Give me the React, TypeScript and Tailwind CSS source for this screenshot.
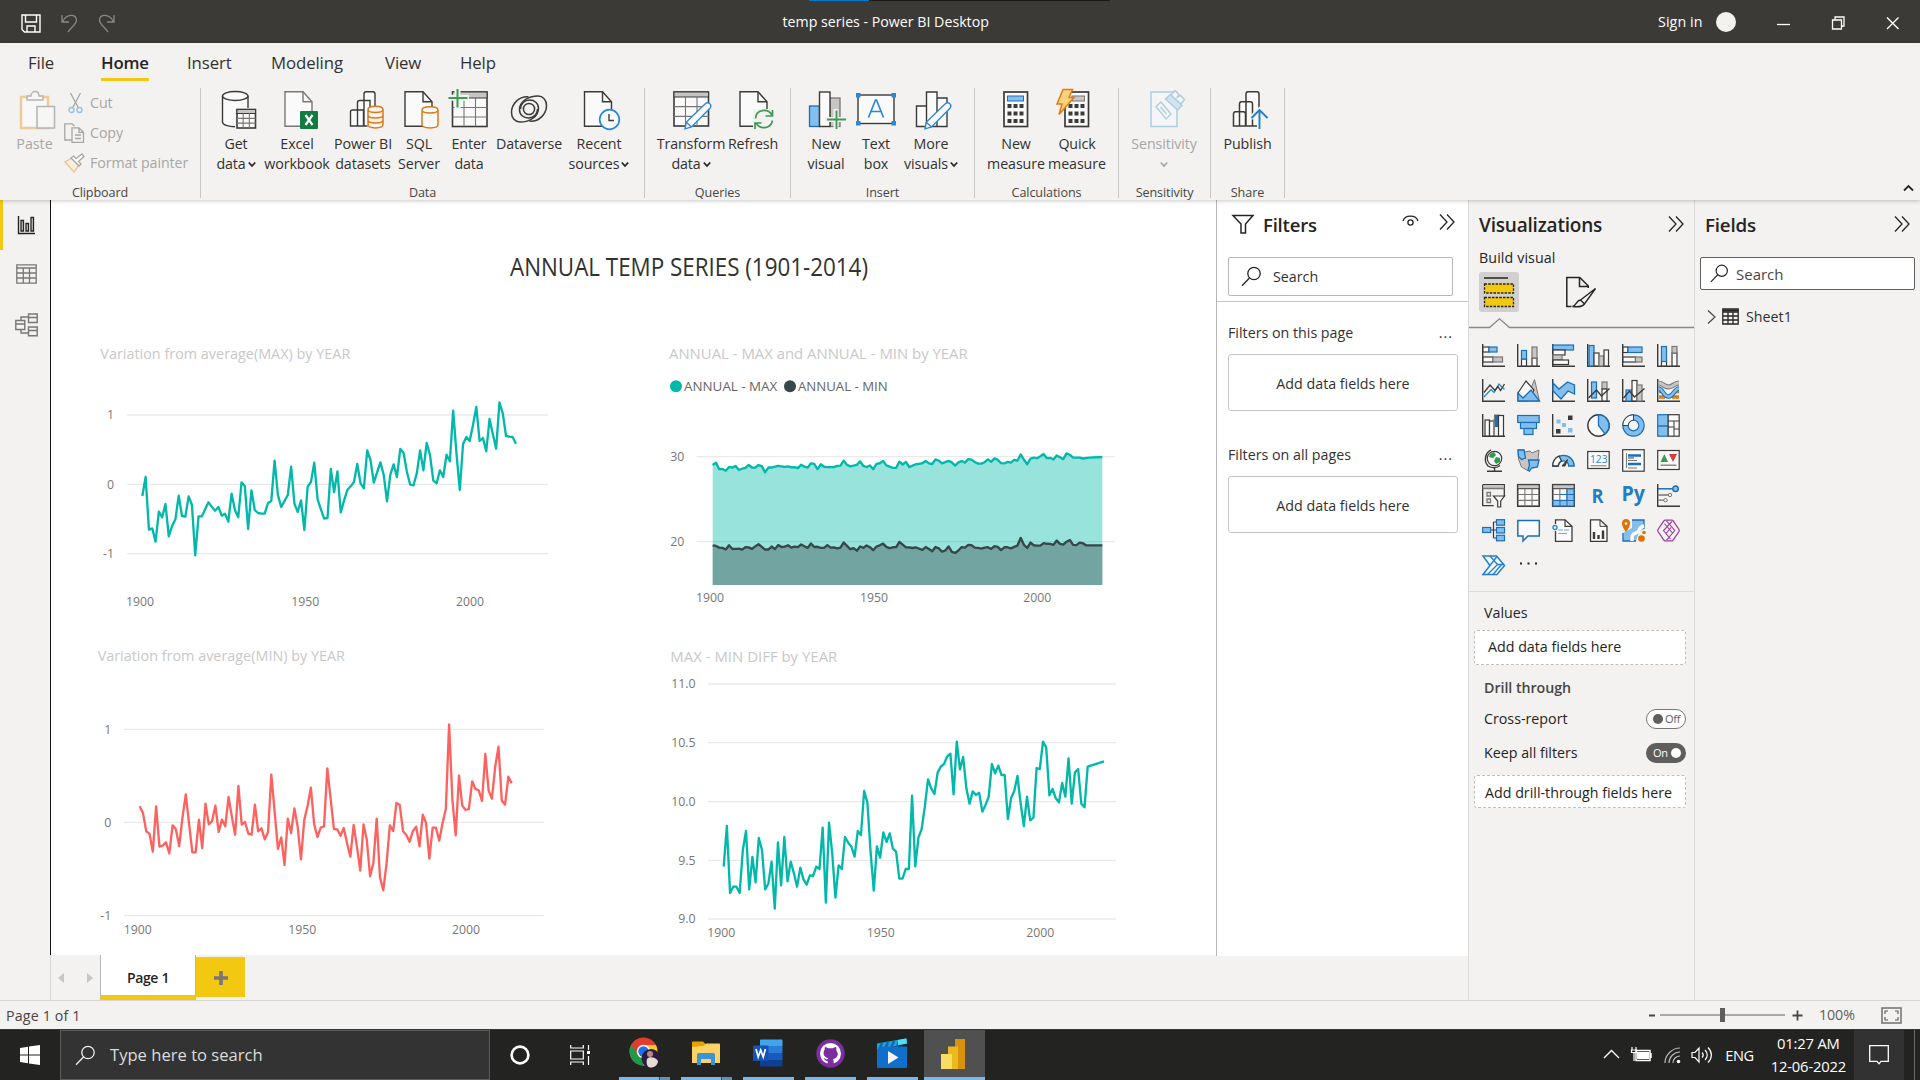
import React from "react";

type Kids = { children?: React.ReactNode };

const DK = "#3b3a39";
const GY = "#797775";
const LG = "#c8c6c4";
const BL = "#1b6fb8";
const LB = "#83beec";
const WH = "#fafafa";

/* ---------- data ---------- */

const maxVar = [
  498, 441, 599, 595, 635, 545, 562, 522, 619, 588, 568, 497, 558, 560, 499, 525, 676, 559, 559, 538, 517, 530, 542, 531, 557,
  551, 575, 491, 540, 562, 457, 469, 597, 481, 540, 549, 551, 551, 519, 513, 392, 495, 531, 513, 495, 410, 521, 546, 511, 600,
  470, 456, 398, 508, 538, 566, 564, 417, 486, 424, 547, 512, 480, 469, 456, 402, 460, 475, 361, 390, 458, 427, 397, 435, 514,
  434, 403, 441, 357, 369, 425, 464, 466, 430, 361, 421, 339, 375, 452, 460, 421, 441, 374, 394, 242, 370, 480, 342, 321, 333,
  285, 231, 333, 324, 364, 267, 312, 356, 217, 250, 318, 320, 321, 341,
];

const minVar = [
  499, 519, 574, 581, 635, 499, 620, 617, 607, 640, 556, 568, 618, 533, 463, 550, 637, 637, 539, 624, 491, 553, 543, 497, 576,
  539, 559, 471, 530, 584, 438, 554, 546, 581, 584, 494, 574, 565, 598, 576, 404, 515, 627, 592, 675, 536, 579, 505, 560, 658,
  540, 498, 443, 552, 591, 563, 559, 385, 475, 567, 568, 587, 564, 610, 650, 555, 620, 692, 553, 600, 709, 668, 536, 712, 751,
  670, 556, 573, 489, 495, 574, 585, 605, 573, 560, 619, 524, 549, 656, 563, 563, 602, 550, 507, 253, 480, 586, 407, 497, 510,
  507, 424, 447, 451, 483, 342, 452, 476, 380, 320, 482, 494, 410, 430,
];

const diff = [
  680, 558, 759, 740, 740, 759, 630, 573, 748, 651, 727, 594, 630, 748, 731, 665, 806, 607, 736, 591, 724, 665, 700, 740, 683,
  718, 734, 706, 708, 680, 687, 563, 788, 548, 640, 773, 676, 687, 591, 608, 620, 650, 573, 585, 453, 487, 635, 752, 619, 653,
  577, 606, 580, 626, 635, 716, 716, 687, 687, 467, 679, 592, 567, 500, 418, 445, 462, 398, 380, 372, 349, 341, 463, 305, 388,
  351, 445, 491, 454, 465, 458, 515, 495, 470, 372, 400, 377, 405, 405, 537, 475, 453, 408, 490, 558, 470, 541, 533, 384, 387,
  305, 322, 466, 447, 475, 487, 429, 470, 355, 491, 397, 387, 491, 502, 380,
];

const line = (ys: number[], x0: number, step: number) => ys.map((y, i) => `${(x0 + i * step).toFixed(1)},${y.toFixed(1)}`).join(" ");

const annualMax = line(maxVar.map((y) => 405 + (y - 498) * 0.124), 188, 9.83) + " 1318,383 1357,381";
const annualMin = line(minVar.map((y) => 646 + (y - 499) * 0.091), 188, 9.83) + " 1308,646 1357,646";

/* ---------- charts ---------- */

function Chart({ h, children }: { h: number } & Kids) {
  return (
    <svg width="480" height={h} viewBox={`0 0 1440 ${h * 3}`} fill="none" strokeLinejoin="round" fontFamily="'Open Sans', sans-serif">
      {children}
    </svg>
  );
}

function Title({ x, y, w, children }: { x: number; y: number; w: number } & Kids) {
  return (
    <text x={x} y={y} textLength={w} lengthAdjust="spacingAndGlyphs" fontSize="43" fill="#c8c8c8">
      {children}
    </text>
  );
}

function Axis({ x1, x2, rows, labelX, years, yearY }: { x1: number; x2: number; rows: [string, number][]; labelX: number; years: number[]; yearY: number }) {
  return (
    <g fontSize="37" fill="#777777">
      {rows.map(([t, y]) => (
        <g key={t}>
          <line x1={x1} x2={x2} y1={y} y2={y} stroke="#eaeaea" strokeWidth="4" />
          <text x={labelX} y={y + 13} textAnchor="end">
            {t}
          </text>
        </g>
      ))}
      {years.map((x, i) => (
        <text key={x} x={x} y={yearY} textLength="84" lengthAdjust="spacingAndGlyphs">
          {1900 + i * 50}
        </text>
      ))}
    </g>
  );
}

/* ---------- shared icons ---------- */

function Svg({ w, h, children, cls = "" }: { w: number; h: number; cls?: string } & Kids) {
  return (
    <svg width={w} height={h} viewBox={`0 0 ${w} ${h}`} fill="none" className={"shrink-0 overflow-visible " + cls}>
      {children}
    </svg>
  );
}

const DoubleChevron = () => (
  <Svg w={16} h={18}>
    <path d="M1 1.5l7 7.5-7 7.5M8 1.5l7 7.5-7 7.5" stroke="#252423" strokeWidth="1.3" />
  </Svg>
);

const Magnifier = ({ c = "#252423", s = 21 }: { c?: string; s?: number }) => (
  <svg width={s} height={s} viewBox="0 0 21 21" fill="none" className="shrink-0">
    <circle cx="13" cy="7.5" r="6.2" stroke={c} strokeWidth="1.3" />
    <path d="M8.5 12L1 19.8" stroke={c} strokeWidth="1.3" />
  </svg>
);

const Chev = ({ c = "#252423" }: { c?: string }) => (
  <Svg w={8} h={7}>
    <path d="M.8 1.5L4 5 7.200 1.5" stroke={c} strokeWidth="1.8" />
  </Svg>
);

/* ---------- ribbon ---------- */

const Page = ({ x = 10, c = DK, w = 27 }: { x?: number; c?: string; w?: number }) => (
  <>
    <path d={`M${x} 3.7h${w - 9}l9 10V38.300h-${w}z`} fill={WH} stroke={c} strokeWidth="1.4" />
    <path d={`M${x + w - 9} 3.700v10h9`} stroke={c} strokeWidth="1.4" />
  </>
);

const Grid = ({ x, y, w, h, head = 4, c = "#605e5c" }: { x: number; y: number; w: number; h: number; head?: number; c?: string }) => {
  const b = h - head;
  return (
    <>
      <rect x={x} y={y} width={w} height={h} fill={WH} stroke={c} strokeWidth="1.6" />
      <rect x={x} y={y} width={w} height={head} fill="#c8c6c4" stroke={c} />
      <path
        d={`M${x} ${y + head + b / 3}h${w}M${x} ${y + head + (2 * b) / 3}h${w}M${x + w / 3} ${y + head}v${b}M${x + (2 * w) / 3} ${y + head}v${b}`}
        stroke={GY}
        strokeWidth="1.1"
      />
    </>
  );
};

const Pencil = () => (
  <path d="M40.500 15.500c2 1.600 1.600 3.200.5 4.700L22.500 39l-6.500 1.800 1.200-6.500L36 16c1.500-1.300 3-1.600 4.500-.5zM17.500 34.500l4.500 4" fill={WH} stroke="#2b88d8" strokeWidth="1.4" />
);

const swirl = "M21.500 8.800C12 8 4.500 16 4.500 24.500C4.500 30 8 34 13 34C23 34 31.500 28.500 31.500 20.500C31.500 15 27.500 12 22.500 12C17 12 13.500 16 13.500 21";

const icons: Record<string, React.ReactNode> = {
  getData: (
    <>
      <path d="M8.500 8v26c0 2.800 5.500 4.700 13 4.700S34 36.800 34 34V8" fill={WH} stroke={DK} strokeWidth="1.4" />
      <ellipse cx="21.250" cy="8" rx="12.750" ry="4.500" fill={WH} stroke={DK} strokeWidth="1.400" />
      <rect x="21" y="20" width="23" height="21" fill="#f3f2f1" />
      <Grid x={23} y={21.500} w={18.500} h={18.500} c={DK} />
    </>
  ),
  excel: (
    <>
      <Page x={10} c={GY} />
      <rect x="25" y="23" width="18" height="18" rx="1" fill="#107c41" />
      <path d="M30.500 27l7 10M37.500 27l-7 10" stroke="#fff" strokeWidth="2.200" />
    </>
  ),
  datasets: (
    <>
      <path d="M23 38V6c0-1.500.8-2.300 2-2.300h7c1.200 0 2 .8 2 2.300v32zM16.500 38V14.500c0-1.300.8-2 2-2H29V38zM9.500 38V24c0-1.300.8-2 2-2h11v16z" fill={WH} stroke={DK} strokeWidth="1.400" />
      <path d="M26.500 21v18h17V21z" fill="#f3f2f1" />
      <path d="M27 21.500v15c0 4.500 15 4.500 15 0v-15c0-4.500-15-4.500-15 0c0 4 15 4 15 0M27 27c0 4 15 4 15 0M27 32c0 4 15 4 15 0" fill="#fdf3ea" stroke="#d97b1c" strokeWidth="1.500" />
    </>
  ),
  sql: (
    <>
      <Page x={8} />
      <path d="M25 22v14.500c0 4.500 16 4.500 16 0V22c0-4.500-16-4.500-16 0c0 4 16 4 16 0" fill={WH} stroke="#d97b1c" strokeWidth="1.500" />
    </>
  ),
  enter: (
    <>
      <Grid x={5.500} y={4} w={34.500} h={34.500} head={6} c={DK} />
      <path d="M0 9.800h22M10.500 0v21" stroke="#f3f2f1" strokeWidth="6" />
      <path d="M1.500 10h19M10.500 1v18.500" stroke="#3a9c50" strokeWidth="2" />
    </>
  ),
  dataverse: (
    <g stroke={DK} strokeWidth="1.500">
      <path d={swirl} />
      <path d={swirl} transform="rotate(180 22 21)" />
      <circle cx="22" cy="21" r="5.600" />
    </g>
  ),
  recent: (
    <>
      <Page x={7.500} />
      <circle cx="32.500" cy="31.500" r="9.800" fill={WH} stroke="#2b88d8" strokeWidth="1.700" />
      <path d="M32 26v6.500h5" stroke={DK} strokeWidth="1.400" />
    </>
  ),
  transform: (
    <>
      <Grid x={5} y={4} w={34.500} h={34} head={5} c={DK} />
      <Pencil />
    </>
  ),
  refresh: (
    <>
      <Page x={9} />
      <path d="M22 21h22v20H22z" fill="#f3f2f1" />
      <path d="M24.500 30.500c.5-9 12-11 16.500-3.500M41.500 22v6h-7M41.500 32.500c-1.500 8-12 10-16.500 2.500M24 41v-6h6.500" stroke="#3f9b54" strokeWidth="1.700" />
    </>
  ),
  newVisual: (
    <>
      <rect x="5.500" y="18" width="10" height="20.500" fill={LB} stroke={BL} strokeWidth="1.300" />
      <rect x="26" y="10" width="10" height="28.500" fill={LG} stroke={GY} strokeWidth="1.300" />
      <rect x="15.500" y="4" width="10.500" height="34.500" fill={WH} stroke={DK} strokeWidth="1.400" />
      <path d="M21 31.500h22M32 21v20" stroke="#f3f2f1" strokeWidth="5" />
      <path d="M23 31.500h19M32.500 22.500v18.500" stroke="#3a9c50" strokeWidth="1.900" />
    </>
  ),
  textBox: (
    <>
      <rect x="4" y="7" width="36" height="28.500" fill={WH} stroke={DK} strokeWidth="1.400" />
      <path d="M2 5h4.500v4.500H2zM37.500 5H42v4.500h-4.500zM2 33h4.500v4.500H2zM37.500 33H42v4.500h-4.500z" fill="#2b88d8" />
      <path d="M14.500 29.500L21.500 12h1l7 17.500M17 23.500h10" stroke="#2b88d8" strokeWidth="1.700" />
    </>
  ),
  moreVisuals: (
    <>
      <path d="M7.500 18h10v20.500h-10zM28 10h10v28.500H28zM17.500 4H28v34.500H17.500z" fill={WH} stroke={DK} strokeWidth="1.400" />
      <Pencil />
    </>
  ),
  measure: (
    <>
      <rect x="10" y="4" width="23.500" height="34.500" fill={WH} stroke={DK} strokeWidth="1.700" />
      <rect x="13.500" y="8" width="16" height="5" fill={LB} stroke={BL} />
      <path d="M13.500 18h16M13.500 25.500h16M13.500 33h16" stroke={DK} strokeWidth="4" strokeDasharray="4 2" />
    </>
  ),
  quick: (
    <>
      <rect x="10" y="4" width="23.500" height="34.500" fill={WH} stroke={DK} strokeWidth="1.700" />
      <rect x="17" y="8" width="12.500" height="5" fill={LG} stroke={GY} />
      <path d="M13.500 18h16M13.500 25.500h16M13.500 33h16" stroke={DK} strokeWidth="4" strokeDasharray="4 2" />
      <path d="M8 1.500h9.500l-3.500 8h5L4 26.500l3-10.500H2z" fill="#fbd27c" stroke="#e07b10" strokeWidth="1.500" />
    </>
  ),
  sensitivity: (
    <g opacity="0.45">
      <path d="M9 4h26v34.500H9z" fill={WH} stroke="#5ba4cf" strokeWidth="1.500" />
      <path d="M14 18.500l5-4.500 10 12-5 5zM18.500 19l6 7" fill={WH} stroke="#5ba4cf" strokeWidth="1.400" />
      <path d="M23.500 11l5-4.500 11.500 11-4.500 4.500z" fill="#a9d3ee" stroke="#5ba4cf" strokeWidth="1.600" />
      <path d="M29 7l4-4.500 4 4-1.500 2.500 3-1.500 4 4-3.500 4.500z" fill={WH} stroke="#5ba4cf" strokeWidth="1.500" />
    </g>
  ),
  publish: (
    <>
      <path d="M20 38V6c0-1.500.8-2.300 2-2.300h9c1.200 0 2 .8 2 2.300v32zM13.500 38V16c0-1.500.8-2.300 2-2.300h9c1.200 0 2 .8 2 2.300v22zM7.500 38V26c0-1.500.8-2.300 2-2.300h8c1.200 0 2 .8 2 2.300v12z" fill={WH} stroke={DK} strokeWidth="1.500" />
      <path d="M33.500 42V20M25 30l8.500-8 8.500 8" stroke="#f3f2f1" strokeWidth="5" />
      <path d="M33.500 41V21.500M25.500 30l8-8 8 8" stroke="#1f7fc4" strokeWidth="1.900" />
    </>
  ),
};

function Btn({ w, icon, a, b, chev, dim }: { w: string; icon: string; a: string; b?: string; chev?: boolean; dim?: boolean }) {
  return (
    <div className={"flex shrink-0 flex-col items-center text-[14.25px] leading-5 tracking-[-0.1px] whitespace-nowrap " + w + (dim ? " text-[#a8a6a4]" : " text-[#323130]")}>
      <Svg w={44} h={42} cls="mb-[4px]">
        {icons[icon]}
      </Svg>
      <span>{a}</span>
      <span className="flex h-5 items-center gap-[2px]">
        {b}
        {chev && <Chev c={dim ? "#a8a6a4" : "#252423"} />}
      </span>
    </div>
  );
}

function Group({ w, pad, label, children }: { w: string; pad: string; label: string } & Kids) {
  return (
    <div className={"flex h-[110px] shrink-0 flex-col border-r border-[#c8c6c4] " + w}>
      <div className={"flex h-[93px] shrink-0 " + pad}>{children}</div>
      <div className="shrink-0 pt-[2px] text-center text-[12.6px] leading-[19px] tracking-[-0.1px] text-[#484644]">{label}</div>
    </div>
  );
}

function Ribbon() {
  return (
    <div className="relative z-10 h-[157px] shrink-0 bg-[#f3f2f1] shadow-[0_1px_4px_rgba(0,0,0,0.22)]">
      <div className="flex h-[45px] pl-[28px] text-[16.8px] leading-[40px] tracking-[-0.1px] text-[#323130]">
        <span className="w-[73px]">File</span>
        <span className="relative w-[86px] font-semibold tracking-[-0.200px] text-[#252423]">
          Home
          <i className="absolute top-[35px] left-0 h-[3px] w-[48px] bg-[#f2c811]" />
        </span>
        <span className="w-[84px]">Insert</span>
        <span className="w-[114px]">Modeling</span>
        <span className="w-[75px]">View</span>
        <span>Help</span>
      </div>
      <div className="flex">
        <Group w="w-[201px]" pad="" label="Clipboard">
          <div className="flex w-[69px] flex-col items-center text-[14.250px] leading-5 text-[#a8a6a4]">
            <Svg w={44} h={42} cls="mb-[4px] ml-[5px]">
              <g opacity="0.5">
                <path d="M6 9h27v31H6z" fill="#fff" stroke="#e8a33d" strokeWidth="2.500" />
                <path d="M12 12V8h4c0-6 8-6 8 0h4v4z" fill={WH} stroke={GY} strokeWidth="1.400" />
                <path d="M22 18.500h17.500V40H22z" fill={WH} stroke={GY} strokeWidth="1.500" />
              </g>
            </Svg>
            <span>Paste</span>
          </div>
          <div className="-ml-[1px] flex flex-col gap-[10px] pt-[5px] text-[14.250px] leading-5 tracking-[-0.100px] text-[#a8a6a4]">
            <div className="flex items-center gap-[4px]">
              <Svg w={17} h={20}>
                <path d="M2.500 0l8 15M12.500 0l-8 15" stroke="#a8a6a4" strokeWidth="1.300" />
                <circle cx="3.500" cy="17" r="2.500" stroke="#92c3e2" strokeWidth="1.400" />
                <circle cx="11.500" cy="17" r="2.500" stroke="#92c3e2" strokeWidth="1.400" />
              </Svg>
              <span className="pl-px">Cut</span>
            </div>
            <div className="flex items-center gap-[5px]">
              <Svg w={21} h={20} cls="-ml-[4px]">
                <path d="M8 17H.8V.8H8L10.500 3" stroke="#a8a6a4" strokeWidth="1.300" />
                <path d="M8 4.800h7l4.500 4.500v10H8zM15 4.800v4.500h4.500M11 12h6M11 15.500h6" stroke="#a8a6a4" strokeWidth="1.300" />
              </Svg>
              Copy
            </div>
            <div className="flex items-center gap-[5px] whitespace-nowrap">
              <Svg w={21} h={20} cls="-ml-[4px]">
                <path d="M1 9l9 10 5-7-7-7z" fill="#fdf0e0" stroke="#f0c090" strokeWidth="1.300" />
                <path d="M7 5l8 8 2-2-2.500-2.500L20 3.500 18 1l-6 4.500L9.500 3z" fill={WH} stroke="#a8a6a4" strokeWidth="1.300" />
              </Svg>
              Format painter
            </div>
          </div>
        </Group>
        <Group w="w-[444px]" pad="pl-[4px]" label="Data">
          <Btn w="w-[62px]" icon="getData" a="Get" b="data" chev />
          <Btn w="w-[60px]" icon="excel" a="Excel" b="workbook" />
          <Btn w="w-[72px]" icon="datasets" a="Power BI" b="datasets" />
          <Btn w="w-[40px]" icon="sql" a="SQL" b="Server" />
          <Btn w="w-[60px]" icon="enter" a="Enter" b="data" />
          <Btn w="w-[60px]" icon="dataverse" a="Dataverse" />
          <Btn w="w-[80px]" icon="recent" a="Recent" b="sources" chev />
        </Group>
        <Group w="w-[146px]" pad="pl-[8px]" label="Queries">
          <Btn w="w-[76px]" icon="transform" a="Transform" b="data" chev />
          <Btn w="w-[48px]" icon="refresh" a="Refresh" />
        </Group>
        <Group w="w-[184px]" pad="pl-[9px]" label="Insert">
          <Btn w="w-[52px]" icon="newVisual" a="New" b="visual" />
          <Btn w="w-[48px]" icon="textBox" a="Text" b="box" />
          <Btn w="w-[62px]" icon="moreVisuals" a="More" b="visuals" chev />
        </Group>
        <Group w="w-[144px]" pad="pl-[8px]" label="Calculations">
          <Btn w="w-[66px]" icon="measure" a="New" b="measure" />
          <Btn w="w-[56px]" icon="quick" a="Quick" b="measure" />
        </Group>
        <Group w="w-[92px]" pad="" label="Sensitivity">
          <Btn w="w-[90px]" icon="sensitivity" a="Sensitivity" chev dim />
        </Group>
        <Group w="w-[74px]" pad="" label="Share">
          <Btn w="w-[73px]" icon="publish" a="Publish" />
        </Group>
        <div className="flex grow items-end justify-end pr-[6px] pb-[6px]">
          <Svg w={11} h={8}>
            <path d="M1 6.500l4.500-4.500L10 6.500" stroke="#252423" strokeWidth="1.800" />
          </Svg>
        </div>
      </div>
    </div>
  );
}

/* ---------- visualisation gallery ---------- */

const ax = <path d="M.7 0v22.300H23" stroke={DK} strokeWidth="1.400" />;

const R = ({ x, y, w, h, k }: { x: number; y: number; w: number; h: number; k: "b" | "g" | "w" }) => (
  <rect x={x} y={y} width={w} height={h} fill={k === "b" ? LB : k === "g" ? LG : WH} stroke={k === "b" ? BL : k === "g" ? GY : DK} strokeWidth="1.200" />
);

const gallery: React.ReactNode[] = [
  <>{ax}<R x={1} y={3} w={6} h={5} k="w" /><R x={7} y={3} w={8} h={5} k="b" /><R x={1} y={13} w={10} h={5} k="w" /><R x={11} y={13} w={9.500} h={5} k="g" /></>,
  <>{ax}<R x={4.500} y={15} w={5} h={7} k="w" /><R x={4.500} y={6.500} w={5} h={8.500} k="b" /><R x={15} y={14} w={5} h={8} k="w" /><R x={15} y={3} w={5} h={11} k="g" /></>,
  <>{ax}<R x={1} y={1} w={20.500} h={5} k="b" /><R x={1} y={6} w={12} h={5} k="w" /><R x={1} y={11} w={9} h={5} k="g" /><R x={1} y={16} w={15.500} h={4.500} k="w" /></>,
  <>{ax}<R x={2} y={1.500} w={5} h={20.500} k="b" /><R x={7} y={9} w={5} h={13} k="w" /><R x={12} y={12} w={5} h={10} k="g" /><R x={17} y={6} w={4.500} h={16} k="w" /></>,
  <>{ax}<R x={1} y={3} w={5} h={5.500} k="w" /><R x={6} y={3} w={14} h={5.500} k="b" /><R x={1} y={13} w={12.500} h={5} k="w" /><R x={13.500} y={13} w={6.500} h={5} k="g" /></>,
  <>{ax}<R x={4.500} y={17} w={5} h={5} k="w" /><R x={4.500} y={2.500} w={5} h={15} k="b" /><R x={15} y={9} w={5} h={13} k="w" /><R x={15} y={2.500} w={5} h={6.500} k="g" /></>,
  <>{ax}<path d="M2 18l7-7.500 3 3L17 5l5.500 5.500" stroke="#2b88d8" strokeWidth="1.300" /><path d="M2 13.500l6-7.500 5 5.500 3-4 2.500 4L22.500 5" stroke={DK} strokeWidth="1.300" /></>,
  <><path d="M9 22L17.500.5l5 21.500z" fill={LG} stroke={GY} /><path d="M1 14L9 2l8 9-7 11H1z" fill={WH} stroke={DK} strokeWidth="1.200" /><path d="M1 22v-8l5 5 8-8 8.500 11z" fill={LB} stroke={BL} strokeWidth="1.300" /></>,
  <>{ax}<path d="M1 4l6 6L15.500 3 22.500 6v9L16 12l-7 8-8-8z" fill={LB} stroke={BL} strokeWidth="1.300" /></>,
  <>{ax}<R x={4.500} y={3} w={5} h={16} k="b" /><R x={15} y={3} w={5} h={7} k="g" /><R x={15} y={10} w={5} h={12} k="w" /><path d="M1.500 19l8-8 5 6L22.500 9.500" stroke={DK} strokeWidth="1.400" /></>,
  <>{ax}<R x={4} y={11} w={6} h={11} k="b" /><R x={10} y={1.500} w={5} h={20.500} k="w" /><R x={15} y={6} w={5} h={16} k="g" /><path d="M1.500 19l6-7 5 6L22.500 9.500" stroke={DK} strokeWidth="1.400" /></>,
  <>{ax}<path d="M2 12.500h5M16 12.500h6M2 18h6M15 18h7" stroke="#e07b10" strokeWidth="3.500" /><path d="M1.500 4c5 0 5 4 10 4s5-4 10.500-4" stroke={GY} strokeWidth="5" /><path d="M1.500 4c5 0 5 4 10 4s5-4 10.500-4" stroke={LG} strokeWidth="3" /><path d="M1.500 9.500c4 0 5 8 10 8s6-8 10.500-8" stroke={BL} strokeWidth="4.500" /><path d="M1.500 9.500c4 0 5 8 10 8s6-8 10.500-8" stroke={LB} strokeWidth="2.500" /></>,
  <>{ax}<R x={3} y={6} w={4.500} h={16} k="w" /><R x={7.500} y={7} w={4.500} h={15} k="w" /><path d="M11 7h2.500V2H16v10" stroke={GY} strokeWidth="3" /><path d="M14.500 1v12" stroke={BL} strokeWidth="3" /><R x={16.500} y={1.500} w={5} h={20.500} k="w" /></>,
  <><R x={.700} y={1.500} w={21.500} h={7} k="b" /><R x={3.500} y={8.500} w={16} h={6} k="b" /><R x={7} y={14.500} w={9} h={6} k="b" /></>,
  <>{ax}<path d="M16 1.500h4.500V6H16zM4 15h4.500v4.500H4z" fill={DK} /><path d="M4.500 5.500h4v4h-4zM10 9h4v4h-4zM16 14h4.500v4.500H16z" fill={LB} /></>,
  <><circle cx="11.500" cy="11.500" r="10.700" fill={WH} stroke={DK} strokeWidth="1.400" /><path d="M11.500.8a10.700 10.700 0 016.500 19L11.500 11.500z" fill={LB} stroke={BL} strokeWidth="1.300" /></>,
  <><circle cx="11.500" cy="11.500" r="8" stroke={BL} strokeWidth="6.500" /><circle cx="11.500" cy="11.500" r="8" stroke={LB} strokeWidth="4.200" /><path d="M11.500.7A10.800 10.800 0 00.7 11.500h5.500a5.300 5.300 0 015.300-5.300z" fill={WH} stroke={DK} /></>,
  <><R x={.700} y={.700} w={10.500} h={21.500} k="b" /><path d="M.7 12h10.500" stroke={BL} strokeWidth="1.400" /><R x={11.200} y={.700} w={11} h={21.500} k="w" /><path d="M11.200 7h11M17 7v15M11.200 13h6M17 15h5" stroke={DK} /></>,
  <><circle cx="12.500" cy="9.500" r="7.200" fill={WH} stroke={DK} strokeWidth="1.200" /><path d="M8 5l4-2 2 3-3 3-4-1zM14 8l4 1v4l-4 2-2-3z" fill="#2e9a4e" /><path d="M9 .8A10.500 10.500 0 006 17c4 2.500 9 2 12-.5M12.500 18v4M5 22.200h15" stroke={DK} strokeWidth="1.400" /></>,
  <><path d="M1 1h6l1 2 5-1 2 2 7-3-1 10-1 7-6 1-2.500 3-7-4-3-8z" fill={LG} stroke={GY} /><path d="M1 1h6l1.500 8-4 1.500-3-3zM11.500 11h10.500l-1.500 7-6 1-2 3-1.500-1 1.500-5z" fill={LB} stroke={BL} strokeWidth="1.300" /></>,
  <><path d="M.8 17A10.700 10.700 0 0122.200 17h-5.500a5.200 5.200 0 00-10.400 0z" fill={LB} stroke={BL} strokeWidth="1.300" /><path d="M.8 17A10.700 10.700 0 017 7l2.500 5c-2 1-3.200 3-3.200 5z" fill={WH} stroke={DK} strokeWidth="1.300" /><path d="M10 17l5.500-6.500L13 17z" fill={DK} stroke={DK} /></>,
  <><R x={.700} y={2.500} w={21.500} h={17} k="w" /><text x="3" y="14" fontSize="10.500" fill="#2b88d8" textLength="17.500" lengthAdjust="spacingAndGlyphs" fontFamily="'Open Sans', sans-serif">123</text><path d="M3.500 16.800h16" stroke={GY} /></>,
  <><R x={.700} y={.700} w={21.500} h={21.500} k="w" /><path d="M4.500 4v15M6 11.500h9M6 19h9" stroke={GY} /><path d="M6 6.500h13M6 15h13" stroke={BL} strokeWidth="2.400" /><path d="M6 9h6" stroke={DK} /></>,
  <><R x={.700} y={1.500} w={21.500} h={19} k="w" /><path d="M3.500 13l3.800-8 3.800 8z" fill="#3a9c50" /><path d="M12 5h8l-4 8z" fill="#e03a3a" /><path d="M3.500 16.200h16" stroke={GY} strokeWidth="1.300" /></>,
  <><path d="M.7.7h21.600v12M.7.7v21h11" fill="none" stroke={DK} strokeWidth="1.300" /><path d="M1.300 1.500h20.500v2.500H1.300z" fill={LG} /><path d="M.7 4.500h21.600M5 8.500h3.500V12H5zM5 15h3.500v3.500H5z" stroke={GY} strokeWidth="1.300" /><path d="M11.500 12h11l-3.800 5v6h-3v-6z" fill={WH} stroke={DK} strokeWidth="1.200" /></>,
  <><Grid x={.7} y={.7} w={21.500} h={21.500} head={4} c={DK} /></>,
  <><Grid x={.7} y={.7} w={21.500} h={21.500} head={4} c={DK} /><path d="M15 5h7v17H1v-5.500h14zM8 10.500h7" fill={LB} stroke={BL} strokeWidth="1.200" /><path d="M15 10.500h7M8 16.500h14M8 16.500V22M15 16.500V22" stroke={BL} /></>,
  <><text x="4.500" y="18.500" fontSize="20" fontWeight="700" fill="#1f7fc4" textLength="12" lengthAdjust="spacingAndGlyphs" fontFamily="'Open Sans', sans-serif">R</text></>,
  <><text x="-.5" y="16.500" fontSize="20.500" fontWeight="700" fill="#1f7fc4" textLength="23.500" lengthAdjust="spacingAndGlyphs" fontFamily="'Open Sans', sans-serif">Py</text></>,
  <>{ax}<path d="M1 4.800h14" stroke={BL} strokeWidth="1.500" /><circle cx="18.500" cy="4.800" r="2.800" fill={LB} stroke={BL} strokeWidth="1.400" /><path d="M1 11h10.500M1 16.200h6" stroke={GY} strokeWidth="1.300" /><circle cx="13" cy="11" r="1.700" stroke={GY} /><circle cx="8.500" cy="16.200" r="1.700" stroke={GY} /></>,
  <><path d="M8 11h7M11.500 3v16M11.500 3H15M11.500 19H15" stroke={DK} strokeWidth="1.200" /><R x={.7} y={8.500} w={8} h={5} k="b" /><R x={14.500} y={.7} w={8} h={5.500} k="b" /><R x={14.500} y={8.500} w={8} h={5.500} k="b" /><R x={14.500} y={16.300} w={8} h={5.500} k="b" /></>,
  <><path d="M.8 1.500h21.500V17H11l-5 5v-5H.8z" fill={WH} stroke={BL} strokeWidth="1.500" /></>,
  <><path d="M3.500 5V.8h9.500l7 6.500v15H3.500V12" fill={WH} stroke={DK} strokeWidth="1.300" /><path d="M13 .8v6.500h7" stroke={DK} strokeWidth="1.200" /><path d="M6 11h5M6 14.500h9M12 11h5" stroke="#69afe5" /><circle cx="3" cy="8.500" r="2" fill={WH} stroke="#2b88d8" strokeWidth="1.400" /></>,
  <><path d="M3.500.8H13l7 6.500v15H3.500z" fill={WH} stroke={DK} strokeWidth="1.300" /><path d="M13 .8v6.500h7" stroke={DK} /><path d="M7 13v7M11.500 16v4M16 11.500V20" stroke={DK} strokeWidth="2.400" /></>,
  <><path d="M1 14v8h13L17 13l5-3V1H10v8z" fill={LB} /><path d="M1 14v8h13M10 1h12v9" stroke={BL} strokeWidth="1.300" /><path d="M10 22c0-5 0-7 4-8s2-6 8-7" stroke={WH} strokeWidth="3.500" /><path d="M4 0a4 4 0 014 4.500C8 8 4 13 4 13S0 8 0 4.500A4 4 0 014 0z" fill="#e07000" /><circle cx="4" cy="4.500" r="1.300" fill={WH} /><circle cx="19.500" cy="19.500" r="3.300" fill="#e07000" /><circle cx="22" cy="13.500" r="1.800" fill="#e07000" /></>,
  <><path d="M8.300 1.200h6.400q1 0 1.600 1l5.700 8.300q.6 1 0 2l-5.700 8.300q-.6 1-1.600 1H8.300q-1 0-1.600-1L1 12.500q-.6-1 0-2l5.700-8.300q.6-1 1.600-1z" stroke="#9b3f9b" strokeWidth="1.300" /><path d="M9.500 1.800l8.300 9.700-8.300 9.700M15 2.500L6.500 11.500l7 8.500M7.500 4.500l8 9.500M9 14.500l5-6" stroke="#9b3f9b" strokeWidth="1.100" /></>,
  <><path d="M1 2h13.500l8 9.500L15 20.500H1l7-9z" fill={WH} stroke="#1f7fd4" strokeWidth="1.500" /><path d="M8 2l7.500 8.500M8 11.500L15 2.500M15.500 10.500h6.500M5.500 20.500l10-10M11 20.500l8.500-10" stroke="#1f7fd4" strokeWidth="1.300" /></>,
];

/* ---------- side panes ---------- */

function FieldWell({ cls, children }: { cls: string } & Kids) {
  return <div className={"flex items-center justify-center rounded-[3px] border border-[#c8c6c4] bg-white pt-[2px] " + cls}>{children}</div>;
}

function Filters() {
  return (
    <div className="flex w-[252px] shrink-0 flex-col border-l border-[#b8b6b4] bg-white text-[14.250px] leading-5 text-[#323130]">
      <div className="flex h-[102px] shrink-0 flex-col border-b border-[#c8c6c4] pl-[11px]">
        <div className="flex h-[57px] items-start pt-[14px] pl-[4px]">
          <Svg w={22} h={20}>
            <path d="M1 1.500h20L13.500 10v9H9v-9z" stroke="#252423" strokeWidth="1.500" />
          </Svg>
          <span className="ml-[9px] w-[139px] pt-[1px] text-[18.500px] leading-5 font-semibold tracking-[-0.200px] text-[#252423]">Filters</span>
          <Svg w={17} h={14} cls="mr-[20px]">
            <path d="M1 7C3 .5 14 .5 16 7" stroke="#252423" strokeWidth="1.300" />
            <circle cx="8.500" cy="8.500" r="2.600" stroke="#252423" strokeWidth="1.300" />
          </Svg>
          <div className="-mt-[1px]">
            <DoubleChevron />
          </div>
        </div>
        <div className="flex h-[39px] w-[225px] shrink-0 items-center gap-[11px] rounded-[2px] border border-[#b8b6b4] pl-[12px]">
          <Magnifier />
          Search
        </div>
      </div>
      <div className="flex h-[52px] items-center justify-between pt-[10px] pr-[15px] pl-[11px]">
        <span>Filters on this page</span>
        <span className="tracking-[1px]">...</span>
      </div>
      <FieldWell cls="ml-[11px] h-[57px] w-[230px] shrink-0">Add data fields here</FieldWell>
      <div className="flex h-[65px] items-end justify-between pr-[15px] pb-[11px] pl-[11px]">
        <span>Filters on all pages</span>
        <span className="tracking-[1px]">...</span>
      </div>
      <FieldWell cls="ml-[11px] h-[57px] w-[230px] shrink-0">Add data fields here</FieldWell>
    </div>
  );
}

function Visualizations() {
  return (
    <div className="flex w-[226px] shrink-0 flex-col border-l border-[#dddbd9] text-[14.250px] leading-5 text-[#252423]">
      <div className="flex h-[48px] items-center justify-between pr-[10px] pl-[10px]">
        <span className="pt-[1px] text-[19px] font-semibold tracking-[-0.200px]">Visualizations</span>
        <DoubleChevron />
      </div>
      <span className="h-[24px] pl-[10px] leading-[20px] font-medium tracking-[0.100px]">Build visual</span>
      <div className="flex h-[46px] pl-[10px]">
        <div className="mr-[46px] flex h-[40px] w-[40px] items-center justify-center rounded-[3px] bg-[#d2d0ce]">
          <Svg w={32} h={32}>
            <path d="M1 2h24" stroke="#252423" strokeWidth="1.500" />
            <rect x="1.500" y="8" width="29" height="9" fill="#f2c811" stroke="#252423" strokeWidth="1.300" strokeDasharray="2.500 1.200" />
            <rect x="1.500" y="21.500" width="29" height="9" fill="#f2c811" stroke="#252423" strokeWidth="1.300" strokeDasharray="2.500 1.200" />
          </Svg>
        </div>
        <Svg w={32} h={32} cls="mt-[4px]">
          <path d="M6.500 30.500H1.800V1.500h13l8.500 8.500v2M14.500 1.500v9h9" stroke="#252423" strokeWidth="1.500" />
          <path d="M30.500 12.500L19.500 28l-4-4zM15.500 24l4 4c-2 3-8 3-12 2.500 4-1 4-6.500 8-6.500z" stroke="#252423" strokeWidth="1.400" />
        </Svg>
      </div>
      <Svg w={226} h={11}>
        <path d="M0 9.500h20.500L30.500 .8l10 8.700H225" stroke="#8a8886" strokeWidth="1.300" />
      </Svg>
      <div className="grid h-[263px] grid-cols-[repeat(6,23px)] content-start gap-[12px] border-b border-[#dddbd9] pt-[15px] pl-[13px]">
        {gallery.map((g, i) => (
          <Svg key={i} w={23} h={23}>
            {g}
          </Svg>
        ))}
        <Svg w={23} h={23}>
          <path d="M3 9.500h2M10.500 9.500h2M18 9.500h2" stroke="#252423" strokeWidth="2" />
        </Svg>
      </div>
      <span className="h-[38px] pt-[11px] pl-[15px]">Values</span>
      <div className="ml-[5px] flex h-[35px] w-[212px] shrink-0 items-center rounded-[3px] border border-dashed border-[#c0bebc] bg-white pb-px pl-[13px] whitespace-nowrap">Add data fields here</div>
      <span className="mt-[13px] pl-[15px] font-semibold tracking-[-0.050px] text-[#484644]">Drill through</span>
      <div className="mt-[11px] flex h-[20px] items-center justify-between pr-[8px] pl-[15px]">
        Cross-report
        <span className="flex h-5 w-10 items-center gap-[2px] rounded-full border border-[#797775] bg-white pl-[6px] text-[11px] tracking-[-0.300px] text-[#605e5c]">
          <i className="h-[10px] w-[10px] rounded-full bg-[#605e5c]" />
          Off
        </span>
      </div>
      <div className="mt-[14px] flex h-[20px] items-center justify-between pr-[8px] pl-[15px]">
        Keep all filters
        <span className="flex h-5 w-10 items-center gap-[3px] rounded-full bg-[#605e5c] pl-[7px] text-[11px] tracking-[-0.300px] text-white">
          On
          <i className="h-[10px] w-[10px] rounded-full bg-white" />
        </span>
      </div>
      <div className="mt-[12px] ml-[5px] flex h-[33px] w-[212px] shrink-0 items-center rounded-[3px] border border-dashed border-[#c0bebc] bg-white pt-[2px] pl-[10px] whitespace-nowrap">Add drill-through fields here</div>
    </div>
  );
}

function Fields() {
  return (
    <div className="flex grow flex-col border-l border-[#dddbd9] text-[14.250px] leading-5 text-[#323130]">
      <div className="flex h-[57px] items-start justify-between pt-[15px] pr-[10px] pl-[10px]">
        <span className="text-[18.800px] font-semibold tracking-[-0.200px] text-[#252423]">Fields</span>
        <DoubleChevron />
      </div>
      <div className="ml-[5px] flex h-[33px] w-[215px] shrink-0 items-center gap-[7px] rounded-[2px] border border-[#605e5c] bg-white pl-[9px] text-[15px] text-[#484644]">
        <Magnifier s={19} />
        <span className="pt-px">Search</span>
      </div>
      <div className="flex items-center pt-[16px] pl-[12px]">
        <Svg w={9} h={16}>
          <path d="M1 1.500l7 6.500-7 6.500" stroke="#484644" strokeWidth="1.200" />
        </Svg>
        <Svg w={17} h={17} cls="mr-[7px] ml-[6px]">
          <path d="M.8 1h15.400v15H.8zM.8 4h15.400M.8 8h15.400M.8 12h15.400M6 4v12M11 4v12" stroke="#252423" strokeWidth="1.300" />
          <path d="M1 2.500h15" stroke="#252423" strokeWidth="2" />
        </Svg>
        <span className="pt-px">Sheet1</span>
      </div>
    </div>
  );
}

/* ---------- report ---------- */

function Report() {
  return (
    <div className="flex h-[755px] flex-col bg-white">
      <div className="flex h-[130px] justify-center pt-[48px]">
        <svg width="380" height="40" viewBox="-10 0 380 40" className="ml-[113px] overflow-visible">
          <text x="0" y="28" textLength="358" lengthAdjust="spacingAndGlyphs" fontSize="25" fill="#323130" fontFamily="'Open Sans', sans-serif">
            ANNUAL TEMP SERIES (1901-2014)
          </text>
        </svg>
      </div>
      <div className="grid grid-cols-[560px_480px] grid-rows-[310px_310px] pl-[39px]">
        <Chart h={290}>
          <Title x={31} y={87} w={750}>Variation from average(MAX) by YEAR</Title>
          <Axis x1={110} x2={1374} labelX={72} rows={[["1", 255], ["0", 463], ["-1", 671]]} years={[108, 604, 1098]} yearY={828} />
          <polyline points={line(maxVar, 157, 9.92)} stroke="#01b8aa" strokeWidth="7" />
        </Chart>
        <Chart h={290}>
          <Title x={57} y={87} w={896}>ANNUAL - MAX and ANNUAL - MIN by YEAR</Title>
          <circle cx="78" cy="169" r="18" fill="#01b8aa" />
          <circle cx="420" cy="169" r="18" fill="#374649" />
          <g fontSize="37" fill="#666666">
            <text x="102" y="183" textLength="280" lengthAdjust="spacingAndGlyphs">ANNUAL - MAX</text>
            <text x="444" y="183" textLength="269" lengthAdjust="spacingAndGlyphs">ANNUAL - MIN</text>
          </g>
          <Axis x1={140} x2={1395} labelX={103} rows={[["30", 380], ["20", 635]]} years={[138, 630, 1120]} yearY={816} />
          <polygon points={`188,765 ${annualMax} 1357,765`} fill="#01b8aa" fillOpacity="0.4" />
          <polygon points={`188,765 ${annualMin} 1357,765`} fill="#374649" fillOpacity="0.4" />
          <polyline points={annualMax} stroke="#01b8aa" strokeWidth="7" />
          <polyline points={annualMin} stroke="#374649" strokeWidth="7" />
        </Chart>
        <Chart h={310}>
          <Title x={23} y={63} w={742}>Variation from average(MIN) by YEAR</Title>
          <Axis x1={102} x2={1361} labelX={64} rows={[["1", 268], ["0", 547], ["-1", 827]]} years={[101, 595, 1086]} yearY={882} />
          <polyline points={line(minVar, 149, 9.876)} stroke="#fd625e" strokeWidth="7" />
        </Chart>
        <Chart h={310}>
          <Title x={61} y={65} w={501}>MAX - MIN DIFF by YEAR</Title>
          <Axis x1={174} x2={1398} labelX={137} rows={[["11.0", 132], ["10.5", 308], ["10.0", 485], ["9.5", 661], ["9.0", 837]]} years={[172, 650, 1129]} yearY={891} />
          <polyline points={line(diff, 221, 9.58) + " 1362,364"} stroke="#01b8aa" strokeWidth="7" />
        </Chart>
      </div>
    </div>
  );
}

function PageTabs() {
  return (
    <div className="flex h-[45px] text-[14px] text-[#252423]">
      <div className="flex w-[49px] items-center gap-[23px] pl-[7px]">
        <i className="border-y-[5px] border-r-[6px] border-y-transparent border-r-[#c8c6c4]" />
        <i className="border-y-[5px] border-l-[6px] border-y-transparent border-l-[#c8c6c4]" />
      </div>
      <div className="flex w-[96px] items-center justify-center border-x border-b-[5px] border-x-[#b8b6b4] border-b-[#f2c811] bg-white pt-[4px] font-semibold tracking-[-0.350px]">Page 1</div>
      <div className="mt-[2px] flex h-[40px] w-[49px] items-center justify-center bg-[#f2c811] pt-px">
        <Svg w={14} h={14}>
          <path d="M0 7h14M7 0v14" stroke="#797775" strokeWidth="3.600" />
        </Svg>
      </div>
    </div>
  );
}

function Rail() {
  return (
    <div className="flex w-[50px] shrink-0 flex-col">
      <div className="flex h-[50px] border-l-[3px] border-[#f2c811] pt-[16px] pl-[14px]">
        <Svg w={18} h={19}>
          <path d="M1.500 0v17.500H18" stroke="#252423" strokeWidth="1.400" />
          <path d="M4 4.500h2.500V15H4zM9 7.500h2.500V15H9zM14 1.500h2.500V15H14z" fill={LG} stroke="#252423" strokeWidth="1.300" />
        </Svg>
      </div>
      <div className="flex h-[50px] pt-[14px] pl-[16px]">
        <Svg w={21} h={20}>
          <path d="M.8.8h19.400v18.400H.8zM.8 4h19.400M.8 9h19.400M.8 14h19.400M7.300 4v15M13.500 4v15" stroke="#797775" strokeWidth="1.300" />
        </Svg>
      </div>
      <div className="flex h-[50px] pt-[13px] pl-[15px]">
        <Svg w={23} h={24}>
          <path d="M.8 7.500h9v9h-9zM.8 11h9M13.500 1h8.700v8.500h-8.700zM13.500 4.500h8.700M13.500 14h8.700v8.700h-8.700zM13.500 17.500h8.700M6 7.500V4h7.500M6 16.500V20h7.500" stroke="#797775" strokeWidth="1.400" />
        </Svg>
      </div>
    </div>
  );
}

/* ---------- frame ---------- */

function TitleBar() {
  return (
    <div className="relative flex h-[43px] shrink-0 items-center bg-[#3b3a37] text-[14.250px] text-white">
      <div className="absolute top-0 left-[809px] flex h-px w-[301px] bg-[#1b1a19]">
        <i className="w-[60px] bg-[#0078d4]" />
      </div>
      <div className="flex w-[782.500px] items-center gap-[20px] pt-[3px] pl-[21px]">
        <Svg w={20} h={19}>
          <path d="M1 1h18v17H3.500L1 15.500zM4.500 1v7h11V1M6 18v-6h8v6" stroke="#fff" strokeWidth="1.400" />
        </Svg>
        <Svg w={17} h={19}>
          <path d="M1 1v7h7M1.500 7.500C6-1 15 0 15.500 6c0 4-4 6-8.500 12" stroke="#8a8886" strokeWidth="1.300" />
        </Svg>
        <Svg w={17} h={19}>
          <path d="M16 1v7H9M15.500 7.500C11-1 2 0 1.500 6c0 4 4 6 8.500 12" stroke="#8a8886" strokeWidth="1.300" />
        </Svg>
      </div>
      <span className="w-[875.500px] text-[14.200px]">temp series - Power BI Desktop</span>
      <span className="w-[58px] tracking-[0.100px]">Sign in</span>
      <i className="mr-[41px] h-[20px] w-[20px] rounded-full bg-[#f3f2f1]" />
      <Svg w={124} h={16}>
        <path d="M0 10.500h13" stroke="#fff" strokeWidth="1.300" />
        <path d="M55.500 6h9v9h-9zM58 6V3h9v9h-2.500" stroke="#fff" strokeWidth="1.300" />
        <path d="M110 3.500l11.500 11.500M121.500 3.500L110 15" stroke="#fff" strokeWidth="1.400" />
      </Svg>
    </div>
  );
}

function StatusBar() {
  return (
    <div className="flex h-[29px] shrink-0 items-center border-t border-[#d8d6d4] text-[14.250px] text-[#484644]">
      <span className="w-[1648px] pt-px pl-[6px] tracking-[0.150px]">Page 1 of 1</span>
      <Svg w={156} h={16}>
        <path d="M1 8.500h6M144.500 8.500h10M149.500 3.500v10" stroke="#484644" strokeWidth="1.800" />
        <path d="M12 8h125" stroke="#605e5c" />
        <rect x="72" y="1" width="5" height="14" fill="#605e5c" />
      </Svg>
      <span className="w-[77px] pl-[15px] tracking-[-0.100px] text-[#605e5c]">100%</span>
      <Svg w={21} h={17} cls="mt-px">
        <rect x="1" y="1" width="19" height="15" stroke="#797775" strokeWidth="1.600" />
        <path d="M4 7V4h3M14 4h3v3M17 10v3h-3M7 13H4v-3" stroke="#605e5c" strokeWidth="1.200" />
      </Svg>
    </div>
  );
}

function Task({ w, m, on, more, children }: { w: string; m: string; on?: boolean; more?: boolean } & Kids) {
  return (
    <div className={"flex h-[50px] shrink-0 flex-col items-center " + w + " " + m + (on ? " bg-[#505050]" : "")}>
      <div className="flex h-[47px] items-center pb-[1px]">{children}</div>
      <div className="flex h-[3px] w-full justify-end bg-[#76b9ed]">{more && <i className="w-[11px] border-l border-[#33516a] bg-[#5f92bb]" />}</div>
    </div>
  );
}

function Taskbar() {
  return (
    <div className="flex h-[51px] shrink-0 items-center border-t border-[#363634] bg-[#232322] text-white">
      <div className="flex w-[60px] pl-[20px]">
        <Svg w={20} h={20}>
          <path d="M0 3l8-1.200V9.500H0zM9 1.600L20 0v9.500H9zM0 10.500h8v7.700L0 17zM9 10.500h11V20L9 18.400z" fill="#fff" />
        </Svg>
      </div>
      <div className="flex h-[50px] w-[430px] shrink-0 items-center gap-[14px] border border-[#5c5c5c] bg-[#333333] pl-[14px] text-[16.600px] text-[#dcdcdc]">
        <Magnifier c="#f0f0f0" s={21} />
        <span className="pt-px">Type here to search</span>
      </div>
      <div className="flex w-[129px] shrink-0 items-center gap-[40px] pl-[20px]">
        <Svg w={20} h={20}>
          <circle cx="10" cy="10" r="8.400" stroke="#fff" strokeWidth="2.600" />
        </Svg>
        <Svg w={21} h={20}>
          <path d="M.7 0v3h12.600V0M.7 6h12.600v8H.7zM.7 20v-3h12.600v3M18.500 0v5M18.500 11v9" stroke="#fff" strokeWidth="1.200" />
          <path d="M17 6h3v3h-3z" fill="#fff" />
        </Svg>
      </div>
      <Task w="w-[51px]" m="" more>
        <Svg w={32} h={32} cls="ml-px">
          <circle cx="14.500" cy="14.500" r="14" fill="#e33b2e" />
          <path d="M2.400 7.500A14 14 0 0014 28.500l6-10.500-5.500-3.500-6 3z" fill="#1e9b48" />
          <path d="M14.500 8h12.400a14 14 0 01-12.900 20.500l6-10.500z" fill="#fcc934" />
          <circle cx="14.500" cy="14.500" r="6.700" fill="#fff" />
          <circle cx="14.500" cy="14.500" r="5.200" fill="#1a73e8" />
          <circle cx="22" cy="21.500" r="9.500" fill="#2b1c3d" />
          <path d="M18 22c2-3 9-2 11 2 0 4-4 7-8 6.500-3-.5-4-4-3-8.500z" fill="#e6dcd4" />
          <circle cx="21" cy="17" r="3" fill="#b58a90" />
        </Svg>
      </Task>
      <Task w="w-[51px]" m="ml-[11px]" more>
        <Svg w={28} h={24} cls="mr-px">
          <path d="M0 1.500C0 .7.500.5 1 .5h10l3 3-2 3H0z" fill="#e8a200" />
          <path d="M0 6l11-1 3-2.500h13c.6 0 1 .3 1 1V22H0z" fill="#fdd267" />
          <path d="M5 24V14c0-1.200.8-2 2-2h14c1.200 0 2 .8 2 2v10h-4v-6H9v6z" fill="#3a94d8" />
        </Svg>
      </Task>
      <Task w="w-[51px]" m="ml-[11px]">
        <Svg w={30} h={28} cls="mr-[2px]">
          <path d="M7 1.500C7 .7 7.500.5 8 .5h20.500c.6 0 1 .3 1 1V7H7z" fill="#41a5ee" />
          <path d="M7 7h22.500v7H7z" fill="#2b7cd3" />
          <path d="M7 14h22.500v7H7z" fill="#185abd" />
          <path d="M7 21h22.500v5.500c0 .6-.4 1-1 1H8c-.6 0-1-.4-1-1z" fill="#103f91" />
          <rect x="0" y="6.500" width="15.500" height="15.500" rx="1" fill="#1553b5" />
          <path d="M3 10l2.200 8L7.700 11l2.500 7 2.200-8" stroke="#fff" strokeWidth="1.700" />
        </Svg>
      </Task>
      <Task w="w-[51px]" m="ml-[11px]">
        <Svg w={29} h={29} cls="mr-px">
          <circle cx="14.500" cy="14.500" r="14.200" fill="#7b2f9e" />
          <circle cx="14.500" cy="14.500" r="10.500" fill="#fff" />
          <path d="M9 8c1.500 0 2.500.8 3.500 1.300h4C17.500 8.800 18.500 8 20 8c.6 1.500.4 2.500.3 3.200 3 4 1 8.300-3.300 8.800.7 1 .7 2 .7 5h-6v-3c-3 .3-3-2.500-4.500-3 2-.3 2.500 2 4.500 1.300 0-.4.300-.8.500-1.300-4.300-.5-6-5-3.500-8.500C8.500 9.800 8.700 9 9 8z" fill="#7b2f9e" />
        </Svg>
      </Task>
      <Task w="w-[51px]" m="ml-[11px]">
        <Svg w={30} h={30} cls="mr-px">
          <path d="M0 5.500L29 .5c.6 0 1 .3 1 1v4L1 12c-.6 0-1-.4-1-1z" fill="#1ba5dc" />
          <path d="M5 5l-3 7M11 4l-3 7M17 3l-3 7M23 2l-3 7" stroke="#0d6ab0" strokeWidth="2.500" />
          <path d="M21 2l8-1.500 1 5-9 1.500z" fill="#50e0f5" />
          <path d="M0 12l3-3.500h27v20c0 .8-.4 1.500-1.500 1.500h-27C.4 30 0 29.500 0 28.500z" fill="#0f6fca" />
          <path d="M11 13l10.500 6.500L11 26z" fill="#f4f4f4" />
        </Svg>
      </Task>
      <Task w="w-[61px]" m="ml-[6px]" on>
        <Svg w={24} h={30} cls="mt-[2px] mr-[3px]">
          <path d="M14 0h10v30H14z" fill="#d9920c" />
          <path d="M7 7.500h10V30H7z" fill="#edb81b" />
          <path d="M0 15h11v15H0z" fill="#f9dc62" />
        </Svg>
      </Task>
      <div className="flex h-full grow items-center justify-end text-[14.200px]">
        <Svg w={110} h={22} cls="mr-[12px]">
          <path d="M1 14l7.500-7.500L16 14" stroke="#fff" strokeWidth="1.400" />
          <path d="M33 6.500h14v10H33zM48 9v5" stroke="#fff" strokeWidth="1.500" />
          <path d="M34 8h12v7H34z" fill="#fff" />
          <path d="M29 3v3M33 3v3M28.500 6h5v2.500h-5zM31 9v8" stroke="#fff" strokeWidth="1.200" />
          <path d="M62 19C62 11 69 4 77 4M66 19c0-6 5-11 11-11M70 19c0-4 3-7 7-7" stroke="#b8b8b8" strokeWidth="1.200" />
          <circle cx="75.500" cy="17.500" r="1.800" fill="#fff" />
          <path d="M89 8.500h3l4-4.500v14l-4-4.500h-3zM99 8.500c1.500 1.500 1.500 3.500 0 5M102 6c3 3 3 7 0 10M105 3.500c4.500 4.500 4.500 10.500 0 15" stroke="#fff" strokeWidth="1.200" />
        </Svg>
        <span className="mr-[17px] pt-px text-[14.600px] tracking-[-0.400px]">ENG</span>
        <div className="mr-[8px] text-center text-[14.800px] leading-[23px] tracking-[-0.200px]">
          <div>01:27 AM</div>
          <div>12-06-2022</div>
        </div>
        <div className="flex h-full w-[50px] items-center justify-center bg-[#323232]">
          <Svg w={20} h={20}>
            <path d="M.7.7h18.600v15.600H12l-2 2.500-2-2.500H.7z" stroke="#fff" strokeWidth="1.300" />
          </Svg>
        </div>
        <i className="mr-[5px] ml-[10px] h-full w-px bg-[#6a6a6a]" />
      </div>
    </div>
  );
}

export default function App() {
  return (
    <div className="flex h-[1080px] w-[1920px] flex-col overflow-hidden bg-[#f3f2f1] font-['Open_Sans',sans-serif]">
      <TitleBar />
      <Ribbon />
      <div className="flex h-[800px] shrink-0">
        <Rail />
        <div className="flex w-[1166px] shrink-0 flex-col">
          <div className="border-l border-[#111111]">
            <Report />
          </div>
          <div className="border-l border-[#d8d6d4]">
            <PageTabs />
          </div>
        </div>
        <div className="h-[756px]">
          <div className="flex h-full">
            <Filters />
          </div>
        </div>
        <Visualizations />
        <Fields />
      </div>
      <StatusBar />
      <Taskbar />
    </div>
  );
}
